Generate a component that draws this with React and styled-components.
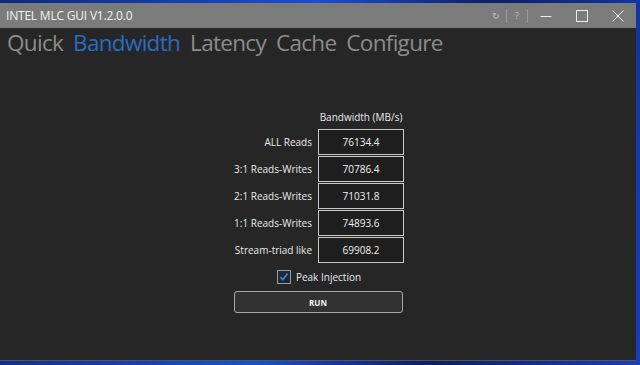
import React from "react";
import styled, { createGlobalStyle } from "styled-components";

const GlobalStyle = createGlobalStyle`
  html, body {
    margin: 0;
    padding: 0;
    width: 640px;
    height: 365px;
    overflow: hidden;
    background: linear-gradient(100deg, #0b2a7a 0%, #1a4fd0 45%, #0a1f66 70%, #1540b8 100%);
    font-family: "Open Sans", "Noto Sans", sans-serif;
  }
`;

const Window = styled.div`
  margin: 3px 4px 0 0;
  width: 636px;
  height: 358px;
  display: flex;
  flex-direction: column;
  background: #262626;
  border-bottom: 1px solid #555;
  box-sizing: border-box;
`;

const TitleBar = styled.div`
  height: 25px;
  background: #7b7b7b;
  display: flex;
  align-items: center;
  padding-left: 6px;
  color: #f2f2f2;
  font-size: 12px;
`;

const Title = styled.div`
  flex: 1;
  letter-spacing: -0.2px;
`;

const SmallBtn = styled.div`
  width: 20px;
  text-align: center;
  font-size: 9px;
  color: #c4c4c4;
`;

const Sep = styled.div`
  width: 1px;
  height: 14px;
  background: #999;
`;

const CtrlBtn = styled.div`
  width: 36px;
  height: 25px;
  display: flex;
  align-items: center;
  justify-content: center;
  color: #eee;
`;

const Tabs = styled.div`
  display: flex;
  gap: 10px;
  padding: 0 0 0 7px;
  height: 34px;
  line-height: 29px;
`;

const Tab = styled.div`
  font-size: 22.5px;
  font-weight: 400;
  letter-spacing: -0.7px;
  color: ${({ $active }) => ($active ? "#2a6cc0" : "#8c8c8c")};
`;

const Content = styled.div`
  display: flex;
  flex-direction: column;
  align-items: center;
  padding-top: 49px;
`;

const Grid = styled.div`
  display: grid;
  grid-template-columns: 80px 86px;
  column-gap: 6px;
  row-gap: 1px;
  align-items: center;
`;

const Header = styled.div`
  grid-column: 2;
  text-align: center;
  font-size: 10px;
  color: #eaeaea;
  height: 17px;
  line-height: 12px;
`;

const Label = styled.div`
  text-align: right;
  font-size: 10px;
  color: #eaeaea;
  white-space: nowrap;
`;

const Value = styled.div`
  height: 24px;
  border: 1px solid #c9c9c9;
  background: #1e1e1e;
  display: flex;
  align-items: center;
  justify-content: center;
  font-size: 10px;
  color: #f0f0f0;
`;

const CheckRow = styled.div`
  display: flex;
  align-items: center;
  gap: 5px;
  margin-top: 7px;
  margin-left: 2px;
  font-size: 10px;
  color: #eaeaea;
`;

const Box = styled.div`
  width: 12px;
  height: 12px;
  border: 1px solid #9a9a9a;
  background: #1d2a38;
  display: flex;
  align-items: center;
  justify-content: center;
`;

const RunButton = styled.div`
  margin-top: 7px;
  width: 167px;
  height: 20px;
  border: 1px solid #a8a8a8;
  border-radius: 3px;
  background: #323232;
  display: flex;
  align-items: center;
  justify-content: center;
  font-size: 8px;
  font-weight: 700;
  color: #f2f2f2;
`;

const rows = [
  ["ALL Reads", "76134.4"],
  ["3:1 Reads-Writes", "70786.4"],
  ["2:1 Reads-Writes", "71031.8"],
  ["1:1 Reads-Writes", "74893.6"],
  ["Stream-triad like", "69908.2"],
];

export default function App() {
  return (
    <>
      <GlobalStyle />
      <Window>
        <TitleBar>
          <Title>INTEL MLC GUI V1.2.0.0</Title>
          <SmallBtn>↻</SmallBtn>
          <Sep />
          <SmallBtn>?</SmallBtn>
          <Sep />
          <CtrlBtn>
            <svg width="12" height="12" viewBox="0 0 12 12">
              <path d="M0.5 6.5h11" stroke="#eee" strokeWidth="1" />
            </svg>
          </CtrlBtn>
          <CtrlBtn>
            <svg width="12" height="12" viewBox="0 0 12 12">
              <rect x="0.5" y="0.5" width="11" height="11" fill="none" stroke="#eee" strokeWidth="1" />
            </svg>
          </CtrlBtn>
          <CtrlBtn>
            <svg width="12" height="12" viewBox="0 0 12 12">
              <path d="M0.5 0.5l11 11M11.5 0.5l-11 11" stroke="#eee" strokeWidth="1" />
            </svg>
          </CtrlBtn>
        </TitleBar>
        <Tabs>
          <Tab>Quick</Tab>
          <Tab $active>Bandwidth</Tab>
          <Tab>Latency</Tab>
          <Tab>Cache</Tab>
          <Tab>Configure</Tab>
        </Tabs>
        <Content>
          <Grid>
            <Header>Bandwidth (MB/s)</Header>
            {rows.map(([label, value]) => (
              <React.Fragment key={label}>
                <Label>{label}</Label>
                <Value>{value}</Value>
              </React.Fragment>
            ))}
          </Grid>
          <CheckRow>
            <Box>
              <svg width="10" height="10" viewBox="0 0 10 10">
                <path d="M1.5 5.2l2.3 2.4L8.6 1.8" fill="none" stroke="#3b8ad8" strokeWidth="1.6" />
              </svg>
            </Box>
            Peak Injection
          </CheckRow>
          <RunButton>RUN</RunButton>
        </Content>
      </Window>
    </>
  );
}
